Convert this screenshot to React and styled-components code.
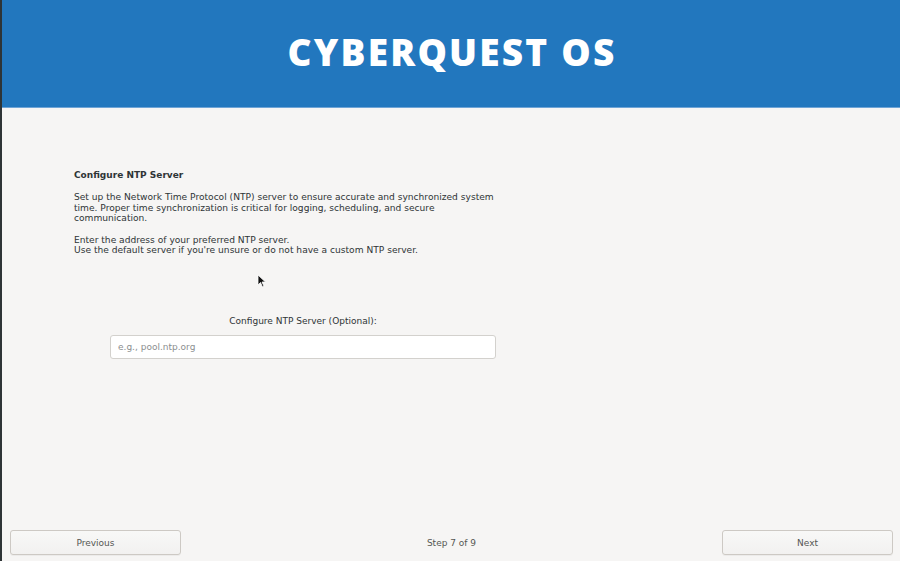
import React from "react";
import styled, { createGlobalStyle } from "styled-components";

const Global = createGlobalStyle`
  html, body { margin: 0; padding: 0; height: 100%; }
  body { background: #f6f5f4; font-family: "DejaVu Sans", sans-serif; }
  #root { height: 100%; }
`;

const Frame = styled.div`
  position: relative;
  height: 561px;
  width: 900px;
  display: flex;
  flex-direction: column;
  border-left: 2px solid #2e3436;
  box-sizing: border-box;
  background: #f6f5f4;
  overflow: hidden;
`;

const Header = styled.header`
  height: 107px;
  background: #2277be;
  border-bottom: 1px solid #6fa4d6;
  display: flex;
  align-items: center;
  justify-content: center;
  flex-shrink: 0;
`;

const Title = styled.h1`
  margin: 0 0 4px 2px;
  color: #ffffff;
  font-family: "Open Sans", sans-serif;
  font-weight: 800;
  font-size: 37px;
  letter-spacing: 2.2px;
`;

const Main = styled.main`
  flex: 1;
  display: flex;
  flex-direction: column;
  padding: 62px 0 0 72px;
`;

const Column = styled.div`
  width: 458px;
  display: flex;
  flex-direction: column;
`;

const Heading = styled.h2`
  margin: 0 0 11px 0;
  font-size: 9px;
  font-weight: bold;
  color: #2e3436;
  line-height: 11px;
`;

const Para = styled.p`
  margin: 0 0 11px 0;
  width: 430px;
  font-size: 9.1px;
  line-height: 10.5px;
  color: #2e3436;
`;

const Form = styled.div`
  margin-top: 49px;
  margin-left: 36px;
  width: 386px;
  display: flex;
  flex-direction: column;
  align-items: center;
  gap: 8px;
`;

const Label = styled.label`
  font-size: 9px;
  color: #2e3436;
  line-height: 11px;
`;

const Input = styled.input`
  box-sizing: border-box;
  width: 386px;
  height: 24px;
  border: 1px solid #d3d1cd;
  border-radius: 3px;
  background: #ffffff;
  padding: 0 7px;
  font-family: "DejaVu Sans", sans-serif;
  font-size: 9px;
  color: #2e3436;
  outline: none;
  &::placeholder { color: #8b8e8f; }
`;

const Footer = styled.footer`
  display: grid;
  grid-template-columns: 171px 1fr 171px;
  align-items: center;
  padding: 0 7px 6px 8px;
`;

const NavButton = styled.button`
  height: 25px;
  border: 1px solid #cdc9c4;
  border-radius: 3px;
  background: linear-gradient(#f8f8f7, #f2f1f0);
  font-family: "DejaVu Sans", sans-serif;
  font-size: 9px;
  color: #555753;
  box-shadow: 0 1px 0 rgba(0,0,0,0.04);
`;

const Step = styled.div`
  text-align: center;
  font-size: 9px;
  color: #555753;
`;

const Cursor = styled.svg`
  position: absolute;
  left: 255px;
  top: 274px;
`;

export default function App() {
  return (
    <>
      <Global />
      <Frame>
        <Header>
          <Title>CYBERQUEST OS</Title>
        </Header>
        <Main>
          <Column>
            <Heading>Configure NTP Server</Heading>
            <Para>
              Set up the Network Time Protocol (NTP) server to ensure accurate and synchronized system
              time. Proper time synchronization is critical for logging, scheduling, and secure
              communication.
            </Para>
            <Para>
              Enter the address of your preferred NTP server.
              <br />
              Use the default server if you're unsure or do not have a custom NTP server.
            </Para>
            <Form>
              <Label>Configure NTP Server (Optional):</Label>
              <Input placeholder="e.g., pool.ntp.org" />
            </Form>
          </Column>
        </Main>
        <Footer>
          <NavButton>Previous</NavButton>
          <Step>Step 7 of 9</Step>
          <NavButton>Next</NavButton>
        </Footer>
        <Cursor width="10" height="14" viewBox="0 0 10 14">
          <path d="M1 1 L1 11 L3.5 8.5 L5.5 13 L7 12.3 L5 8 L8.5 8 Z" fill="#111" stroke="#fff" strokeWidth="0.8" />
        </Cursor>
      </Frame>
    </>
  );
}
